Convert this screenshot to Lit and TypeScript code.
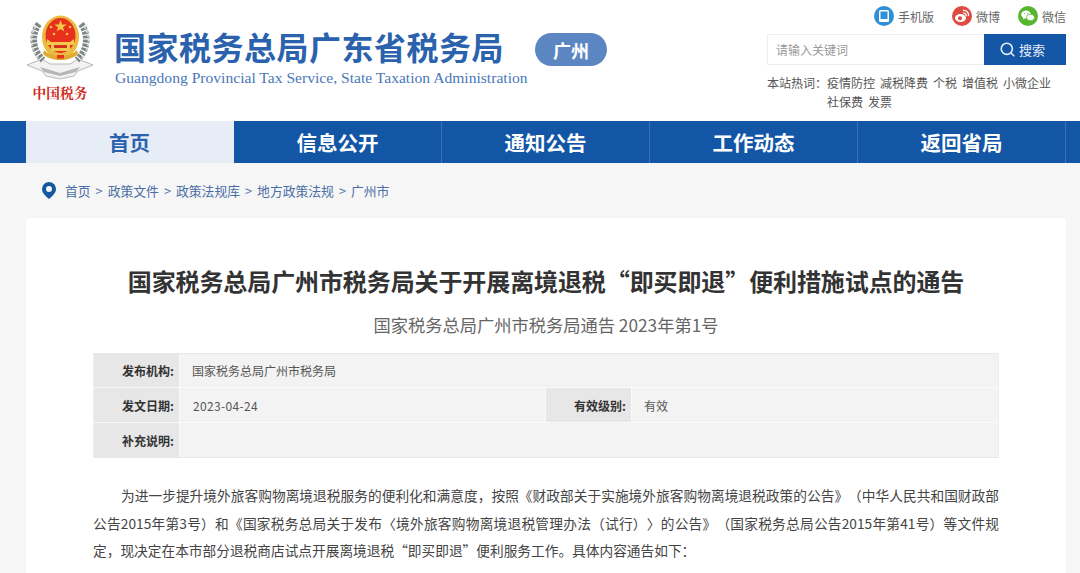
import { LitElement, html, css, svg } from "lit";
import { customElement } from "lit/decorators.js";

const emblem = svg`
<svg class="emblem" width="68" height="72" viewBox="0 0 68 72">
  <path d="M1 51 L16 45 L24 50 L44 50 L52 45 L67 51 L52 57 L48 62 L34 65 L20 62 L16 57 Z" fill="#f1f2f1" stroke="#a4a8a6" stroke-width="0.800"/>
  <path d="M14 53 L34 59 L54 53 L50 58 L34 62 L18 58 Z" fill="#b3b7b5"/>
  <g fill="none" stroke="#7f8682" stroke-width="6.500" stroke-dasharray="3 1.200">
    <path d="M13 10 C5 20 6 36 17 46"/>
    <path d="M55 10 C63 20 62 36 51 46"/>
  </g>
  <g fill="none" stroke="#dfe2e0" stroke-width="1.600" stroke-dasharray="3 1.500">
    <path d="M10 12 C3 22 4 36 14 46"/>
    <path d="M58 12 C65 22 64 36 54 46"/>
  </g>
  <ellipse cx="34.500" cy="23" rx="18.500" ry="21.500" fill="#e9bb42"/>
  <ellipse cx="34.500" cy="21.500" rx="15" ry="17.500" fill="#e8301c"/>
  <path d="M34.500 6l1.600 4.400h4.600l-3.700 2.800 1.400 4.400-3.900-2.700-3.900 2.700 1.400-4.400-3.700-2.800h4.600z" fill="#f2c845"/>
  <g fill="#f2c845">
    <circle cx="25" cy="13" r="1.300"/><circle cx="44" cy="13" r="1.300"/>
    <circle cx="28" cy="20" r="1.300"/><circle cx="41" cy="20" r="1.300"/>
  </g>
  <path d="M25 28 L44 28 L48 25 L48 31 L44 31 L44 37 L25 37 L25 31 L21 31 L21 25 Z" fill="#f1c74c"/>
  <rect x="28" y="31" width="13" height="3" fill="#d5301f"/>
  <path d="M18 36 C26 44 43 44 51 36 L52 40 C43 48 26 48 17 40 Z" fill="#e2aa30"/>
  <rect x="31" y="41" width="7" height="3.500" fill="#e8301c"/>
</svg>`;

const wechat = svg`<svg width="20" height="20" viewBox="0 0 20 20"><circle cx="10" cy="10" r="10" fill="#58b530"/><ellipse cx="8" cy="8.500" rx="4.800" ry="4" fill="#fff"/><path d="M5.500 11.500l-.6 2 2.200-1.200z" fill="#fff"/><ellipse cx="12.500" cy="11.500" rx="4" ry="3.300" fill="#fff" stroke="#58b530" stroke-width=".8"/><circle cx="6.500" cy="7.500" r=".6" fill="#58b530"/><circle cx="9.500" cy="7.500" r=".6" fill="#58b530"/></svg>`;
const phone = svg`<svg width="20" height="20" viewBox="0 0 20 20"><circle cx="10" cy="10" r="10" fill="#2f8fd8"/><rect x="5" y="4" width="10" height="12" rx="1.500" fill="#fff"/><rect x="6.500" y="5.500" width="7" height="7.500" fill="#2f8fd8"/></svg>`;
const weibo = svg`<svg width="20" height="20" viewBox="0 0 20 20"><circle cx="10" cy="10" r="10" fill="#dd4b43"/><ellipse cx="8.500" cy="12" rx="5.500" ry="4" fill="#fff"/><circle cx="8" cy="12.200" r="2" fill="#dd4b43"/><path d="M11.500 4.500a4.500 4.500 0 0 1 5 5M11.800 7.200a2.200 2.200 0 0 1 2.400 2.500" fill="none" stroke="#fff" stroke-width="1.300" stroke-linecap="round"/></svg>`;
const search = svg`<svg width="15" height="15" viewBox="0 0 15 15" fill="none" stroke="#e6edf6" stroke-width="1.600"><circle cx="6.800" cy="6.800" r="5.600"/><path d="M11 11l2.800 2.800" stroke-linecap="round"/></svg>`;
const pin = svg`<svg width="14" height="17" viewBox="0 0 14 17"><path fill-rule="evenodd" d="M7 0a7 7 0 0 1 7 7c0 4-4 7.500-7 10-3-2.500-7-6-7-10a7 7 0 0 1 7-7zm0 4a3 3 0 1 0 0 6 3 3 0 0 0 0-6z" fill="#14589f"/></svg>`;

@customElement("app-root")
export class AppRoot extends LitElement {
  static styles = css`
    :host {
      display: block;
      width: 1080px;
      height: 573px;
      overflow: hidden;
      background: #f6f6f6;
      font-family: "Noto Sans CJK SC", "Liberation Sans", sans-serif;
      color: #333;
      text-spacing-trim: space-all;
    }
    .header {
      height: 121px;
      box-sizing: border-box;
      background: #fff;
      display: flex;
      padding-left: 26px;
    }
    .logo {
      width: 68px;
      display: flex;
      flex-direction: column;
      align-items: center;
      padding-top: 14px;
    }
    .emblem { display: block; }
    .cn-tax {
      font-size: 13.7px;
      line-height: 16px;
      font-weight: 700;
      color: #cf2b22;
      font-family: "Noto Serif CJK SC", "Noto Sans CJK SC", sans-serif;
      white-space: nowrap;
      margin-top: -2px;
    }
    .brand {
      width: 410px;
      margin-left: 20px;
      padding-top: 26px;
    }
    .brand h1 {
      margin: 0;
      font-size: 32px;
      line-height: 40px;
      font-weight: 700;
      color: #2b62ad;
      white-space: nowrap;
      letter-spacing: 0.5px;
    }
    .brand p {
      margin: 2px 0 0;
      padding-left: 1px;
      font-family: "Liberation Serif", serif;
      font-size: 15.6px;
      line-height: 20px;
      color: #4a78b8;
      white-space: nowrap;
    }
    .city {
      margin: 33px 0 0 11px;
      width: 72px;
      height: 33px;
      border-radius: 17px;
      background: #5b86c2;
      color: #fff;
      font-size: 18px;
      font-weight: 700;
      display: flex;
      align-items: center;
      justify-content: center;
    }
    .side {
      width: 299px;
      margin-left: 160px;
      box-sizing: border-box;
    }
    .social {
      display: flex;
      justify-content: flex-end;
      align-items: flex-start;
      gap: 18px;
      padding-top: 6px;
      height: 34px;
      box-sizing: border-box;
    }
    .social span {
      display: flex;
      align-items: center;
      gap: 4px;
      font-size: 12px;
      color: #666;
      height: 20px;
    }
    .search {
      display: flex;
      height: 31px;
      width: 299px;
    }
    .search .input {
      flex: 1;
      border: 1px solid #eeeeee;
      border-right: 0;
      padding-left: 8px;
      font-size: 12px;
      line-height: 29px;
      color: #999;
    }
    .search .btn {
      width: 82px;
      box-sizing: border-box;
      padding-right: 5px;
      background: #1356a6;
      color: #e6edf6;
      font-size: 13px;
      display: flex;
      align-items: center;
      justify-content: center;
      gap: 4px;
    }
    .hot {
      display: flex;
      margin-top: 8px;
      font-size: 12px;
      line-height: 19px;
      color: #555;
    }
    .hot .lead { width: 60px; flex: none; white-space: nowrap; }
    .hot .words { display: flex; flex-wrap: wrap; column-gap: 5px; width: 239px; }
    nav {
      height: 42px;
      background: #1356a6;
      padding-left: 26px;
      display: flex;
    }
    nav a {
      width: 207px;
      border-right: 1px solid #3a72b7;
      color: #fff;
      font-size: 20.5px;
      font-weight: 700;
      line-height: 43px;
      text-align: center;
    }
    nav a.active {
      background: #e7edf6;
      color: #2b62ad;
      border-right-color: #e7edf6;
    }
    .crumbs {
      height: 55px;
      padding-left: 42px;
      display: flex;
      align-items: center;
      gap: 9px;
      font-size: 12.8px;
      color: #4a6ea5;
    }
    .crumbs i { font-style: normal; margin: 0 1px; }
    .crumbs .trail { display: flex; gap: 4px; }
    .card {
      margin-left: 26px;
      width: 1040px;
      height: 400px;
      background: #fff;
      border-radius: 3px;
      padding: 0 67px;
      box-sizing: border-box;
    }
    .card h2 {
      margin: 0;
      padding-top: 44px;
      font-size: 24px;
      line-height: 38px;
      font-weight: 700;
      letter-spacing: -0.1px;
      color: #333;
      text-align: center;
      white-space: nowrap;
    }
    .sub {
      margin-top: 12px;
      font-size: 17.25px;
      line-height: 26px;
      color: #666;
      text-align: center;
    }
    .meta {
      margin-top: 15px;
      display: grid;
      grid-template-columns: 85px 365px 85px 1fr;
      grid-template-rows: 33px 34px 34px;
      gap: 1px;
      background: #fafafa;
      border: 1px solid #e8e8e8;
      border-left-color: #eeeeee;
      border-right-color: #eeeeee;
      font-size: 12px;
      width: 906px;
      box-sizing: border-box;
    }
    .meta div {
      display: flex;
      align-items: center;
      background: #f3f3f3;
      padding-left: 12px;
      color: #555;
    }
    .meta .k {
      background: #e7e7e7;
      font-weight: 700;
      color: #333;
      justify-content: flex-end;
      padding: 0 5px 0 0;
    }
    .meta .wide { grid-column: span 3; }
    .meta .date { letter-spacing: 0.35px; padding-left: 13px; }
    .body {
      margin: 24px 0 0;
      font-size: 13.7px;
      line-height: 27.5px;
      color: #444;
      text-indent: 28px;
      text-align: justify;
    }
  `;

  render() {
    return html`
      <div class="header">
        <div class="logo">${emblem}<div class="cn-tax">中国税务</div></div>
        <div class="brand">
          <h1>国家税务总局广东省税务局</h1>
          <p>Guangdong Provincial Tax Service, State Taxation Administration</p>
        </div>
        <div class="city">广州</div>
        <div class="side">
          <div class="social">
            <span>${phone}手机版</span><span>${weibo}微博</span><span>${wechat}微信</span>
          </div>
          <div class="search">
            <div class="input">请输入关键词</div>
            <div class="btn">${search}搜索</div>
          </div>
          <div class="hot">
            <div class="lead">本站热词：</div>
            <div class="words">
              <span>疫情防控</span><span>减税降费</span><span>个税</span><span>增值税</span><span>小微企业</span><span>社保费</span><span>发票</span>
            </div>
          </div>
        </div>
      </div>
      <nav>
        <a class="active">首页</a><a>信息公开</a><a>通知公告</a><a>工作动态</a><a>返回省局</a>
      </nav>
      <div class="crumbs">
        ${pin}
        <div class="trail">
          <span>首页</span><i>&gt;</i><span>政策文件</span><i>&gt;</i><span>政策法规库</span><i>&gt;</i><span>地方政策法规</span><i>&gt;</i><span>广州市</span>
        </div>
      </div>
      <div class="card">
        <h2>国家税务总局广州市税务局关于开展离境退税“即买即退”便利措施试点的通告</h2>
        <div class="sub">国家税务总局广州市税务局通告 2023年第1号</div>
        <div class="meta">
          <div class="k">发布机构:</div><div class="wide">国家税务总局广州市税务局</div>
          <div class="k">发文日期:</div><div class="date">2023-04-24</div><div class="k">有效级别:</div><div>有效</div>
          <div class="k">补充说明:</div><div class="wide"></div>
        </div>
        <p class="body">为进一步提升境外旅客购物离境退税服务的便利化和满意度，按照《财政部关于实施境外旅客购物离境退税政策的公告》（中华人民共和国财政部公告2015年第3号）和《国家税务总局关于发布〈境外旅客购物离境退税管理办法（试行）〉的公告》（国家税务总局公告2015年第41号）等文件规定，现决定在本市部分退税商店试点开展离境退税“即买即退”便利服务工作。具体内容通告如下：</p>
      </div>
    `;
  }
}
